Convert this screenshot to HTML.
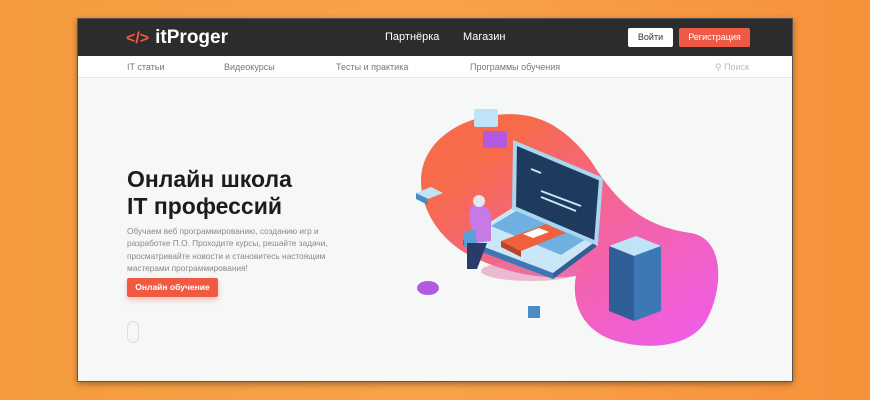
<!DOCTYPE html>
<html><head><meta charset="utf-8"><style>
*{margin:0;padding:0;box-sizing:border-box}
body{width:870px;height:400px;overflow:hidden;background:linear-gradient(90deg,#f59b3e,#f8a24a 50%,#f7913a);font-family:"Liberation Sans",sans-serif;position:relative}
.win{position:absolute;left:77px;top:18px;width:716px;height:364px;background:#f6f8f8;box-shadow:0 2px 6px rgba(0,0,0,.35);border:1px solid #555;overflow:hidden}
.hd{position:absolute;left:0;top:0;width:100%;height:37px;background:#2c2c2c}
.logo{position:absolute;left:48px;top:8px;color:#fff;font-weight:bold;font-size:19px}
.logo b{color:#f05a3e;font-size:16px;margin-right:6px}
.hd .n{position:absolute;top:12px;color:#fff;font-size:11px}
.btn1{position:absolute;left:550px;top:9px;width:45px;height:19px;background:#fff;border-radius:2px;font-size:9px;color:#333;text-align:center;line-height:19px}
.btn2{position:absolute;left:601px;top:9px;width:71px;height:19px;background:#ee5a45;border-radius:2px;font-size:9px;color:#fff;text-align:center;line-height:19px}
.sub{position:absolute;left:0;top:37px;width:100%;height:22px;background:#fff;border-bottom:1px solid #e6e6e6}
.sub span{position:absolute;top:6px;font-size:9px;color:#777}
h1{position:absolute;left:49px;top:147px;font-size:23px;line-height:27px;color:#1c1c1c;font-weight:bold}
.p{position:absolute;left:49px;top:206px;font-size:8.3px;line-height:12.3px;color:#888;width:210px}
.cta{position:absolute;left:49px;top:259px;width:91px;height:19px;background:#f05a42;border-radius:2px;color:#fff;font-size:8.5px;font-weight:bold;text-align:center;line-height:19px;box-shadow:0 3px 6px rgba(240,90,66,.35)}
.mouse{position:absolute;left:49px;top:302px;width:12px;height:22px;border:1px solid #ddd;border-radius:6px}
</style></head><body>
<div class="win">
<div class="hd">
<div class="logo"><b>&lt;/&gt;</b>itProger</div>
<span class="n" style="left:307px">Партнёрка</span>
<span class="n" style="left:385px">Магазин</span>
<div class="btn1">Войти</div>
<div class="btn2">Регистрация</div>
</div>
<div class="sub">
<span style="left:49px">IT статьи</span>
<span style="left:146px">Видеокурсы</span>
<span style="left:258px">Тесты и практика</span>
<span style="left:392px">Программы обучения</span>
<span style="left:637px;color:#bbb">&#9906; Поиск</span>
</div>
<h1>Онлайн школа<br>IT профессий</h1>
<div class="p">Обучаем веб программированию, созданию игр и разработке П.О. Проходите курсы, решайте задачи, просматривайте новости и становитесь настоящим мастерами программирования!</div>
<div class="cta">Онлайн обучение</div>
<div class="mouse"></div>
<svg style="position:absolute;left:-77px;top:-18px" width="870" height="400">
<defs><linearGradient id="g" x1="0" y1="0" x2="1" y2="1"><stop offset="0.2" stop-color="#f76a4a"/><stop offset="0.55" stop-color="#f464a0"/><stop offset="1" stop-color="#ee5cf0"/></linearGradient></defs>
<path fill="url(#g)" d="M495 114 C530 110 560 120 590 160 C615 200 640 225 690 232 C725 238 722 290 705 320 C690 345 650 350 615 340 C580 330 570 300 575 275 C540 280 500 270 470 255 C440 240 420 210 420 180 C420 140 460 117 495 114Z"/>
<rect x="473" y="108" width="24" height="18" rx="2" fill="#bfe3f7"/>
<rect x="482" y="130" width="24" height="17" rx="2" fill="#b25be0"/>
<ellipse cx="530" cy="270" rx="50" ry="10" fill="#e07aa8" opacity=".5"/>
<path d="M513 206 L595 240 L552 272 L462 238Z" fill="#c9e7f7"/>
<path d="M462 238 L552 272 L552 278 L462 244Z" fill="#3b78b5"/>
<path d="M552 272 L595 240 L595 246 L552 278Z" fill="#2f5f96"/>
<path d="M490 225 L560 254 L585 238 L515 210Z" fill="#6fb0e0"/>
<path d="M514 142 L600 178 L595 242 L513 207Z" fill="#1e3a5f" stroke="#a9d6f0" stroke-width="4"/>
<path d="M540 190 L580 205 M540 196 L575 210 M530 168 L540 172" stroke="#cfe6f5" stroke-width="2"/>
<path d="M500 240 L545 223 L565 232 L520 250Z" fill="#f0603d"/>
<path d="M500 240 L520 250 L520 256 L500 246Z" fill="#b8442c"/>
<path d="M522 233 L538 227 L548 231 L532 237Z" fill="#fff"/>
<path d="M470 205 C478 200 488 206 490 214 L490 240 L474 242 L468 215Z" fill="#c77ae6"/>
<circle cx="478" cy="200" r="6" fill="#e7e7ee"/>
<path d="M462 232 L474 228 L476 245 L464 248Z" fill="#5aa0d8"/>
<path d="M466 242 L486 242 L476 268 L466 268Z" fill="#2a3a6a"/>
<path d="M415 192 L430 186 L442 192 L427 198Z" fill="#bfe3f7"/>
<path d="M415 192 L427 198 L427 204 L415 198Z" fill="#4a8cc6"/>
<ellipse cx="427" cy="287" rx="11" ry="7" fill="#b25be0"/>
<rect x="527" y="305" width="12" height="12" fill="#4a8cc6"/>
<path d="M608 245 L635 235 L660 245 L633 255Z" fill="#bfe3f7"/>
<path d="M608 245 L633 255 L633 320 L608 310Z" fill="#2f5f96"/>
<path d="M633 255 L660 245 L660 310 L633 320Z" fill="#3b78b5"/>
</svg>
</div>
</body></html>
